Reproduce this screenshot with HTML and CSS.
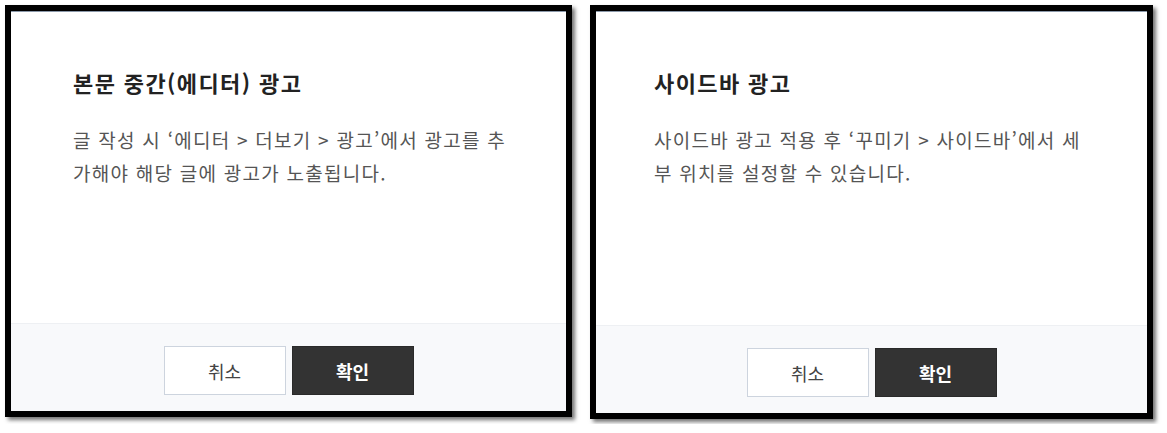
FILE: index.html
```html
<!DOCTYPE html>
<html lang="ko">
<head>
  <meta charset="UTF-8">
  <meta name="viewport" content="width=device-width, initial-scale=1.0">
  <title>광고 설정</title>
  <link rel="stylesheet" href="styles.css">
</head>
<body>
  <div class="dialogs">
    <div class="dialog dialog-left">
      <div class="dialog-body">
        <h2 class="dialog-title">본문 중간(에디터) 광고</h2>
        <p class="dialog-text">글 작성 시 ‘에디터 &gt; 더보기 &gt; 광고’에서 광고를 추가해야 해당 글에 광고가 노출됩니다.</p>
      </div>
      <div class="dialog-footer">
        <button class="btn btn-cancel">취소</button>
        <button class="btn btn-ok">확인</button>
      </div>
    </div>
    <div class="dialog dialog-right">
      <div class="dialog-body">
        <h2 class="dialog-title">사이드바 광고</h2>
        <p class="dialog-text">사이드바 광고 적용 후 ‘꾸미기 &gt; 사이드바’에서 세부 위치를 설정할 수 있습니다.</p>
      </div>
      <div class="dialog-footer">
        <button class="btn btn-cancel">취소</button>
        <button class="btn btn-ok">확인</button>
      </div>
    </div>
  </div>
</body>
</html>
```

FILE: styles.css
```css
body {
  margin: 0;
  padding: 5px;
  background: #fff;
  font-family: "Noto Sans CJK KR", "Noto Sans", sans-serif;
}
.dialogs {
  display: flex;
  align-items: flex-start;
  gap: 18px;
}
.dialog {
  display: flex;
  flex-direction: column;
  box-sizing: border-box;
  border: 6px solid #000;
  background: #fff;
  box-shadow: 3px 3px 4px rgba(0, 0, 0, 0.55);
}
.dialog-left {
  width: 567px;
  height: 412px;
}
.dialog-right {
  width: 563px;
  height: 414px;
}
.dialog-body {
  flex: 1;
  padding: 55px 54px 0 62px;
  border-top: 1px solid #8b99aa;
}
.dialog-right .dialog-body {
  padding-left: 58px;
  padding-right: 58px;
}
.dialog-title {
  margin: 0 0 26px;
  font-size: 22px;
  line-height: 30px;
  font-weight: 700;
  letter-spacing: 1.4px;
  color: #222;
}
.dialog-text {
  margin: 0;
  font-size: 19px;
  line-height: 33px;
  letter-spacing: 1.25px;
  color: #555;
}
.dialog-footer {
  display: flex;
  justify-content: center;
  gap: 6px;
  padding: 22px 0 16px;
  background: #f8f9fb;
  border-top: 1px solid #eef0f3;
}
.btn {
  width: 122px;
  height: 49px;
  font-family: inherit;
  font-size: 18px;
  cursor: pointer;
}
.btn-cancel {
  background: #fff;
  border: 1px solid #cdd4de;
  color: #444;
}
.btn-ok {
  background: #333;
  border: 1px solid #2a2a2a;
  color: #fff;
  font-weight: 700;
}
```
